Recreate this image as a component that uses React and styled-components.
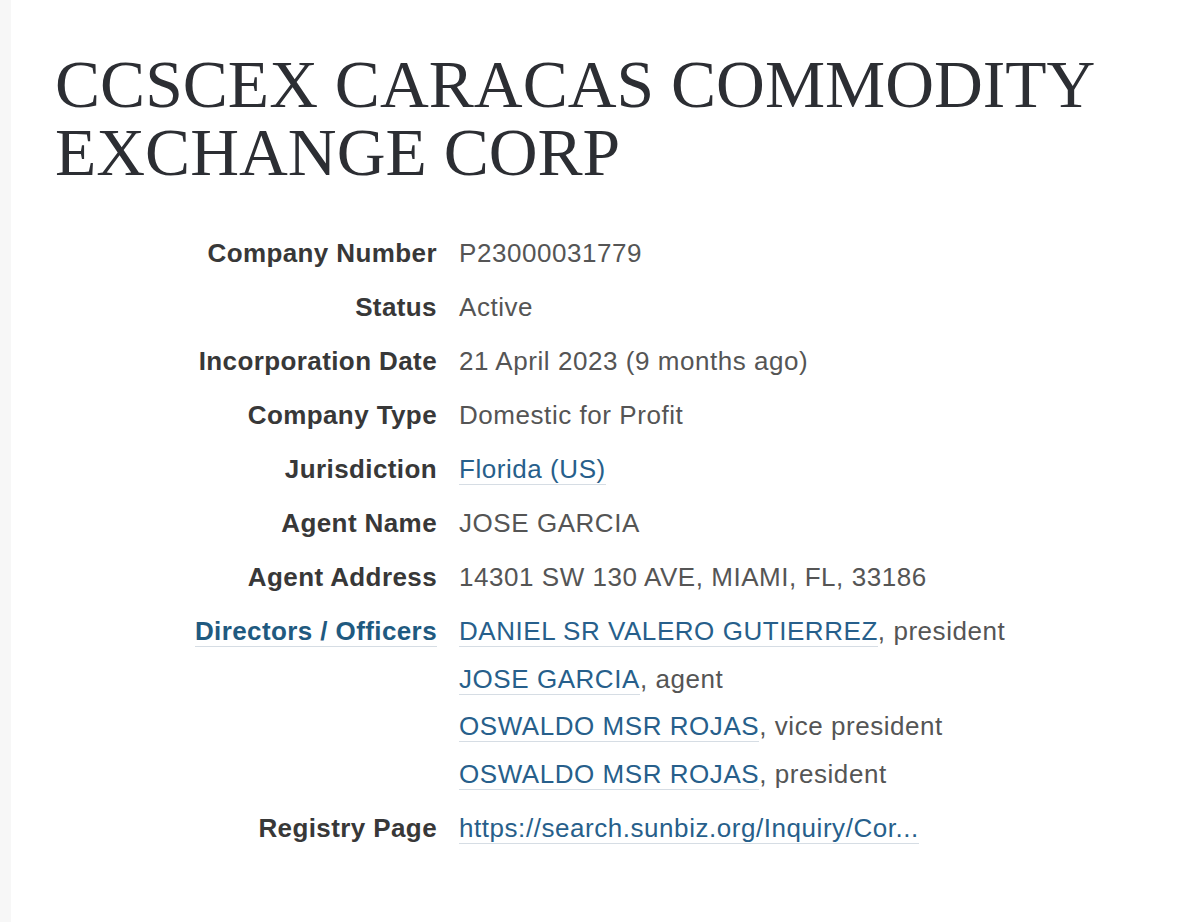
import styled, { createGlobalStyle } from "styled-components";

const GlobalStyle = createGlobalStyle`
  html, body {
    margin: 0;
    padding: 0;
    background: #ffffff;
  }
`;

const LINK = "#275f8b";
const TEXT = "#555555";
const LABEL = "#383838";

const Page = styled.div`
  display: flex;
  min-height: 922px;
`;

const Gutter = styled.div`
  width: 11px;
  flex-shrink: 0;
  background: #f7f7f7;
`;

const Main = styled.main`
  flex: 1;
  padding: 51px 40px 40px 44px;
`;

const Title = styled.h1`
  margin: 0 0 43px;
  font-family: "Liberation Serif", "Times New Roman", serif;
  font-weight: 400;
  font-size: 67.6px;
  line-height: 68px;
  color: #2c2e33;
  max-width: 1100px;
`;

const Attributes = styled.dl`
  display: grid;
  grid-template-columns: 382px 1fr;
  column-gap: 22px;
  row-gap: 7px;
  margin: 0;
  font-family: "Liberation Sans", Arial, sans-serif;
  font-size: 26px;
  line-height: 47px;
`;

const Label = styled.dt`
  text-align: right;
  font-weight: 700;
  letter-spacing: 0.4px;
  color: ${LABEL};
  white-space: nowrap;
`;

const Value = styled.dd`
  margin: 0;
  color: ${TEXT};
  letter-spacing: 0.55px;
  white-space: nowrap;
`;

const Line = styled.div`
  line-height: 47.5px;
`;

const Link = styled.a`
  color: ${LINK};
  text-decoration: none;
  border-bottom: 1px solid #d6dde4;
`;

const LabelLink = styled(Link)`
  color: #1f5a80;
`;

const fields = [
  { label: "Company Number", value: "P23000031779" },
  { label: "Status", value: "Active" },
  { label: "Incorporation Date", value: "21 April 2023 (9 months ago)" },
  { label: "Company Type", value: "Domestic for Profit" },
  { label: "Jurisdiction", link: "Florida (US)" },
  { label: "Agent Name", value: "JOSE GARCIA" },
  { label: "Agent Address", value: "14301 SW 130 AVE, MIAMI, FL, 33186" },
];

const officers = [
  { name: "DANIEL SR VALERO GUTIERREZ", role: "president" },
  { name: "JOSE GARCIA", role: "agent" },
  { name: "OSWALDO MSR ROJAS", role: "vice president" },
  { name: "OSWALDO MSR ROJAS", role: "president" },
];

export default function App() {
  return (
    <>
      <GlobalStyle />
      <Page>
        <Gutter />
        <Main>
          <Title>CCSCEX CARACAS COMMODITY EXCHANGE CORP</Title>
          <Attributes>
            {fields.map((f) => (
              <>
                <Label key={f.label + "-l"}>{f.label}</Label>
                <Value key={f.label + "-v"}>
                  {f.link ? <Link href="#">{f.link}</Link> : f.value}
                </Value>
              </>
            ))}
            <Label>
              <LabelLink href="#">Directors / Officers</LabelLink>
            </Label>
            <Value>
              {officers.map((o, i) => (
                <Line key={i}>
                  <Link href="#">{o.name}</Link>, {o.role}
                </Line>
              ))}
            </Value>
            <Label>Registry Page</Label>
            <Value>
              <Link href="#">https://search.sunbiz.org/Inquiry/Cor...</Link>
            </Value>
          </Attributes>
        </Main>
      </Page>
    </>
  );
}
